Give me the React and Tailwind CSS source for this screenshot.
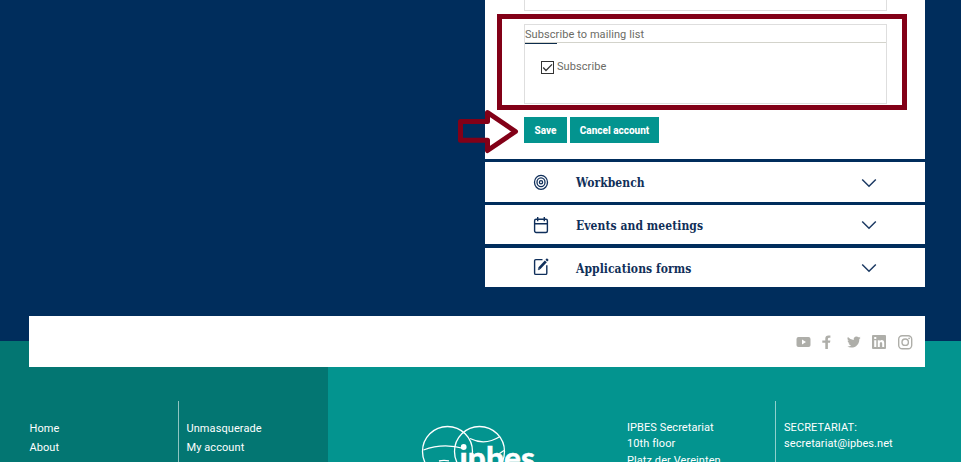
import React from "react";

const Chevron = () => (
  <svg className="mt-px" width="16" height="10" viewBox="0 0 16 10" fill="none" stroke="#1c3a63" strokeWidth="1.5">
    <path d="M1.2 1.5 8 8.3 14.8 1.5" />
  </svg>
);

const TargetIcon = () => (
  <svg width="16" height="18" viewBox="0 0 16 18" fill="none" stroke="#0f2f5b" strokeWidth="1.3">
    <ellipse cx="8" cy="9.3" rx="6.5" ry="7" />
    <ellipse cx="8" cy="9.3" rx="4" ry="4.4" />
    <circle cx="8" cy="9.3" r="1.6" />
  </svg>
);

const CalendarIcon = () => (
  <svg width="16" height="18" viewBox="0 0 16 18" fill="none" stroke="#0f2f5b" strokeWidth="1.4">
    <rect x="1.6" y="3.2" width="12.8" height="13.3" rx="1.5" />
    <path d="M1.6 7.7h12.8M4.7 1v4.2M11.3 1v4.2" />
  </svg>
);

const EditIcon = () => (
  <svg className="-mt-px" width="16" height="18" viewBox="0 0 16 18" fill="none" stroke="#0f2f5b" strokeWidth="1.4">
    <path d="M9.5 1.6H2.8Q1.6 1.6 1.6 2.8V15.2Q1.6 16.4 2.8 16.4H12.6Q13.8 16.4 13.8 15.2V7.2" />
    <path d="M6.3 10.4 12.8 3.3" strokeWidth="2.7" />
    <path d="M13.3 2.7 14.8 1.2" strokeWidth="2.5" />
    <path d="M5.2 11.8 7 11.2 5.7 9.9Z" fill="#0f2f5b" strokeWidth=".5" />
  </svg>
);

const Row = ({ icon, label, height }) => (
  <div className={`flex items-center bg-white pl-12 pr-12 ${height}`}>
    <span className="flex w-[43px]">{icon}</span>
    <span className="flex-1 whitespace-nowrap pt-0.5 font-['Roboto_Slab','DejaVu_Serif_Condensed','DejaVu_Serif',serif] text-[12px] font-bold leading-4 tracking-[0.06px] text-[#112f59] [font-stretch:condensed]">
      {label}
    </span>
    <Chevron />
  </div>
);

const Social = () => (
  <svg width="118" height="16" viewBox="0 0 118 16" fill="#aeaea9">
    <path
      fillRule="evenodd"
      d="M2.5 3h10Q14.5 3 14.5 5v6.2Q14.5 13 12.5 13h-10Q.5 13 .5 11.2V5Q.5 3 2.5 3ZM6 5.6v4.8L10 8Z"
    />
    <path d="M29.3 15V8.8h-3V6.4h3V4.6Q29.3 1.4 32.4 1.4h2v2.4h-1.3q-1.2 0-1.2 1.2v1.4h2.5l-.4 2.4h-2.1V15Z" />
    <path
      transform="translate(51 1.2) scale(.57)"
      d="M23.95 4.57a10 10 0 0 1-2.82.78 4.96 4.96 0 0 0 2.16-2.73c-.95.56-2 .96-3.13 1.18a4.92 4.92 0 0 0-8.38 4.48A13.93 13.93 0 0 1 1.64 3.16a4.92 4.92 0 0 0 1.52 6.57 4.9 4.9 0 0 1-2.23-.61v.06a4.92 4.92 0 0 0 3.95 4.83 4.9 4.9 0 0 1-2.21.08 4.94 4.94 0 0 0 4.6 3.42A9.87 9.87 0 0 1 0 19.54a14 14 0 0 0 7.55 2.21c9.05 0 14-7.5 14-13.98l-.02-.64a9.94 9.94 0 0 0 2.42-2.56Z"
    />
    <path
      fillRule="evenodd"
      d="M77 1h12q1 0 1 1v12q0 1-1 1H77q-1 0-1-1V2q0-1 1-1Zm1.2 5.2V13h2.1V6.2Zm0-3.2v2h2.1V3Zm3.6 3.2V13h2V9.5q0-1.6 1.2-1.6t1.2 1.6V13h2V9q0-3-2.4-3-1.3 0-2 1V6.2Z"
    />
    <g fill="none" stroke="#aeaea9" strokeWidth="1.4">
      <rect x="102.7" y="1.7" width="13" height="13" rx="3.5" />
      <circle cx="109.2" cy="8.2" r="3.2" />
    </g>
    <circle cx="113.1" cy="4.3" r=".9" />
  </svg>
);

const Logo = () => (
  <svg width="128" height="40" viewBox="0 0 128 40" fill="none" stroke="#fff" strokeWidth="1.3">
    <circle cx="26.5" cy="29.5" r="25" />
    <circle cx="58.5" cy="29.5" r="25" />
    <path d="M2.5 28Q22 20.5 43 26.5" />
    <path d="M49 16.500Q64 24 79 14.500" />
    <path d="M18 39Q22 38 28 38.800" />
    <path d="M78.500 31.500 83 28.500" />
    <circle cx="42.700" cy="25" r="2.900" fill="#fff" stroke="none" />
    <text
      x="38.500"
      y="47.300"
      fill="#fff"
      stroke="#fff"
      strokeWidth=".4"
      fontFamily="Lato, sans-serif"
      fontWeight="900"
      fontSize="30"
      textLength="75.500"
      lengthAdjust="spacingAndGlyphs"
    >
      ıpbes
    </text>
  </svg>
);

export default function App() {
  return (
    <div className="flex h-[462px] w-[961px] flex-col overflow-hidden bg-[#002d5c] font-[Roboto,sans-serif] text-[11px] tracking-[0.08px]">
      <main className="relative h-[341px] shrink-0">
        <section className="ml-[485px] flex w-[440px] flex-col">
          <div className="h-[159px] bg-white px-[39px] text-[#6b6b65]">
            <div className="h-[11px] w-[363px] border border-t-0 border-[#dedede]" />
            <div className="mt-[13px] h-20 w-[363px] border border-[#dedede]">
              <div className="h-[18px] border-b border-[#d3d3cb] leading-[19px]">Subscribe to mailing list</div>
              <div className="h-px w-8 bg-[#0c2c4c]" />
              <label className="ml-4 mt-[15px] flex h-4 items-center">
                <svg width="13" height="13" viewBox="0 0 13 13" fill="none" stroke="#333">
                  <rect x=".5" y=".5" width="12" height="12" />
                  <path d="M2.2 6.5 5 9.5 11 3.4" strokeWidth="1.3" />
                </svg>
                <span className="ml-[3px]">Subscribe</span>
              </label>
            </div>
            <div className="mt-[13px] flex gap-[3px] text-[10px] font-extrabold tracking-normal text-white">
              <button className="h-[26px] w-[43px] bg-[#03948f]">Save</button>
              <button className="h-[26px] w-[89px] whitespace-nowrap bg-[#03948f]">Cancel account</button>
            </div>
          </div>
          <div className="h-[3px]" />
          <Row icon={<TargetIcon />} label="Workbench" height="h-10" />
          <div className="h-[3px]" />
          <Row icon={<CalendarIcon />} label="Events and meetings" height="h-[39px]" />
          <div className="h-1" />
          <Row icon={<EditIcon />} label="Applications forms" height="h-[39px]" />
        </section>
        <div className="absolute left-[497px] top-[14px] h-24 w-[410px] border-[5px] border-[#820017]" />
        <svg
          className="absolute left-[455px] top-[106px]"
          width="66"
          height="50"
          viewBox="455 106 66 50"
          fill="none"
          stroke="#820017"
          strokeWidth="5"
          strokeLinejoin="round"
        >
          <path d="M460.5 121.5H487.5V112.5L515.5 131.5 487.5 150.5V140.3H460.5Z" />
        </svg>
      </main>
      <footer className="flex h-[121px] flex-col bg-[linear-gradient(to_right,#037672_328px,#03948f_328px)] text-white">
        <div className="z-10 -mt-[25px] ml-[29px] flex h-[51px] w-[896px] shrink-0 items-center justify-end bg-white pr-[11.5px]">
          <Social />
        </div>
        <div className="mt-[34px] flex h-[61px]">
          <nav className="ml-[29px] w-[149px] pl-[0.5px] pt-[18px] leading-[19px]">
            <div>Home</div>
            <div>About</div>
          </nav>
          <nav className="w-[149px] border-l border-[#8fc4c1] pl-[7.5px] pt-[18px] leading-[19px]">
            <div>Unmasquerade</div>
            <div>My account</div>
          </nav>
          <div className="w-[300px] pl-[94px] pt-[21px]">
            <Logo />
          </div>
          <address className="w-[148px] pt-[19px] not-italic leading-4">
            <div>IPBES Secretariat</div>
            <div>10th floor</div>
            <div className="pt-px">Platz der Vereinten</div>
          </address>
          <div className="w-[186px] border-l border-[#8fd0cc] pl-2 pt-[19px] leading-4">
            <div>SECRETARIAT:</div>
            <div>secretariat@ipbes.net</div>
          </div>
        </div>
      </footer>
    </div>
  );
}
